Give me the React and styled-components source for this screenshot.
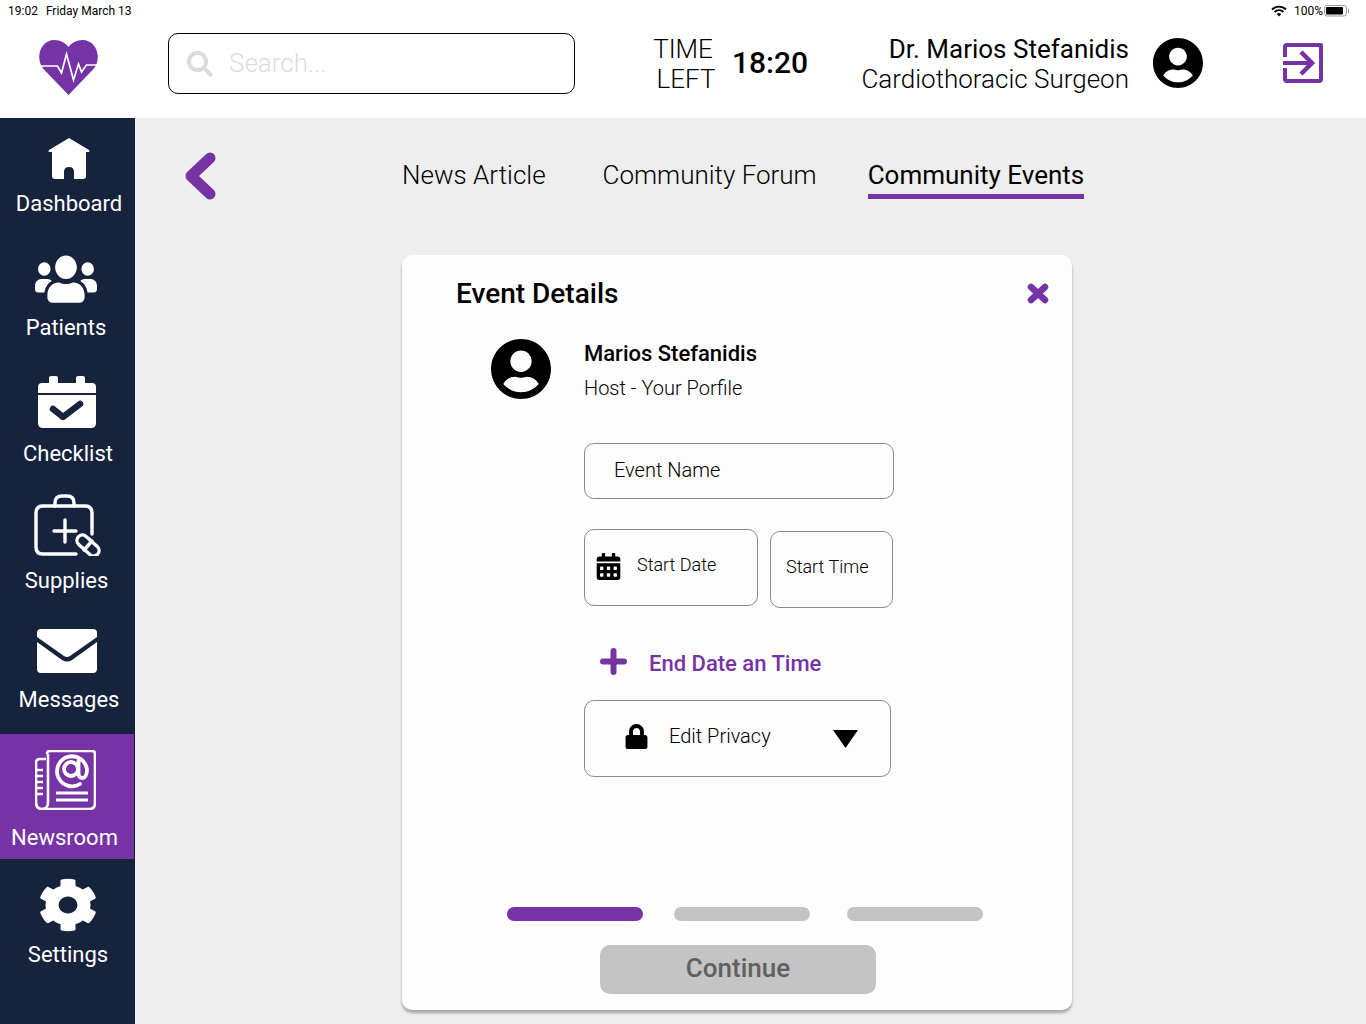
import React from "react";
import styled, { createGlobalStyle } from "styled-components";
import { FaUsers, FaCog, FaLock, FaCalendarAlt, FaSearch, FaUserCircle } from "react-icons/fa";

const purple = "#7533a5";
const navy = "#15233c";

const Global = createGlobalStyle`
  html, body { margin: 0; padding: 0; background: #eee; }
  body { font-family: Roboto, "Liberation Sans", sans-serif; color: #000; }
  * { box-sizing: border-box; }
`;

const Page = styled.div`
  width: 1366px;
  height: 1024px;
  overflow: hidden;
  display: flex;
  flex-direction: column;
`;

const StatusBar = styled.div`
  height: 22px;
  background: #fff;
  display: flex;
  align-items: center;
  padding: 0 16px 0 8px;
  font-size: 12px;
  gap: 8px;
`;

const StatusRight = styled.div`
  margin-left: auto;
  display: flex;
  align-items: center;
  gap: 7px;
`;

const Header = styled.header`
  height: 96px;
  background: #fff;
  display: flex;
  align-items: center;
  padding: 0 0 13px 38px;
`;

const Logo = styled.svg`
  width: 61px;
  height: 55px;
  margin-top: 7px;
`;

const SearchBox = styled.div`
  width: 407px;
  height: 61px;
  margin-left: 69px;
  border: 1px solid #000;
  border-radius: 10px;
  display: flex;
  align-items: center;
  padding-left: 18px;
  gap: 16px;
  color: #dcdcdc;
  font-size: 26px;
  font-weight: 300;
  & > span { margin-bottom: 2px; }
`;

const TimeLabel = styled.div`
  width: 90px;
  margin-left: 63px;
  font-size: 26px;
  font-weight: 300;
  line-height: 30px;
  text-align: center;
  & > span { display: block; }
  & > span + span { padding-left: 6px; }
`;

const TimeValue = styled.div`
  margin: 0 0 2px 4px;
  width: 76px;
  font-size: 30px;
  font-weight: 500;
  white-space: nowrap;
`;

const Doctor = styled.div`
  margin-left: 53px;
  width: 268px;
  text-align: right;
  font-size: 26px;
  line-height: 30px;
  font-weight: 300;
  white-space: nowrap;
  & > strong { display: block; font-weight: 400; }
`;

const HeaderAvatar = styled(FaUserCircle)`
  width: 50px;
  height: 52px;
  margin: 0 0 2px 24px;
`;

const LogoutIcon = styled.svg`
  width: 40px;
  height: 40px;
  margin: 0 0 2px 80px;
`;

const Body = styled.div`
  flex: 1;
  display: flex;
  min-height: 0;
`;

const Sidebar = styled.nav`
  width: 135px;
  background: ${navy};
  display: flex;
  flex-direction: column;
`;

const NavItem = styled.div`
  width: ${p => (p.$active ? "134px" : "135px")};
  height: ${p => p.$h}px;
  padding-top: ${p => p.$pt}px;
  padding-left: ${p => Math.max(0, 2 * p.$cx - 135)}px;
  padding-right: ${p => Math.max(0, 135 - 2 * p.$cx)}px;
  background: ${p => (p.$active ? purple : "transparent")};
  display: flex;
  flex-direction: column;
  align-items: center;
  color: #fff;
`;

const NavLabel = styled.div`
  margin-top: ${p => p.$gap}px;
  margin-left: ${p => p.$lo || 0}px;
  font-size: 22px;
  font-weight: 400;
  line-height: 24px;
  white-space: nowrap;
`;

const Main = styled.main`
  flex: 1;
  background: #eee;
  display: flex;
  flex-direction: column;
`;

const TabRow = styled.div`
  height: 137px;
  display: flex;
  align-items: flex-start;
  padding-left: 49px;
`;

const BackIcon = styled.svg`
  width: 32px;
  height: 48px;
  margin-top: 34px;
`;

const Tabs = styled.div`
  display: flex;
  margin-left: 186px;
  margin-top: 40px;
  gap: 57px;
`;

const Tab = styled.div`
  font-size: 26px;
  font-weight: ${p => (p.$active ? 400 : 300)};
  line-height: 34px;
  height: 41px;
  white-space: nowrap;
  border-bottom: ${p => (p.$active ? `5px solid ${purple}` : "none")};
  margin-left: ${p => p.$ml || 0}px;
`;

const Card = styled.section`
  width: 670px;
  height: 755px;
  margin-left: 267px;
  background: #fdfdfd;
  border-radius: 10px;
  box-shadow: 0 3px 3px rgba(0, 0, 0, 0.3);
  display: flex;
  flex-direction: column;
`;

const CardHead = styled.div`
  display: flex;
  align-items: center;
  justify-content: space-between;
  padding: 20px 23px 0 54px;
  height: 56px;
`;

const CardTitle = styled.h2`
  margin: 0;
  font-size: 28px;
  font-weight: 500;
`;

const CloseIcon = styled.svg`
  width: 22px;
  height: 21px;
`;

const HostRow = styled.div`
  display: flex;
  margin: 28px 0 0 89px;
  gap: 33px;
`;

const HostAvatar = styled(FaUserCircle)`
  width: 60px;
  height: 62px;
  margin-top: -1px;
`;

const HostName = styled.div`
  font-size: 22px;
  font-weight: 500;
  line-height: 28px;
  margin-top: 1px;
`;

const HostRole = styled.div`
  font-size: 20px;
  font-weight: 300;
  line-height: 28px;
  margin-top: 6px;
`;

const Form = styled.div`
  margin: 41px 0 0 182px;
  display: flex;
  flex-direction: column;
  align-items: flex-start;
`;

const Field = styled.div`
  width: ${p => p.$w}px;
  height: ${p => p.$h}px;
  margin-top: ${p => p.$mt || 0}px;
  margin-left: ${p => p.$ml || 0}px;
  padding-left: ${p => p.$pl}px;
  border: 1px solid #8a8a8a;
  border-radius: 10px;
  display: flex;
  align-items: center;
  font-weight: 300;
  font-size: ${p => p.$fs || 20}px;
`;

const DateRow = styled.div`
  display: flex;
  align-items: flex-start;
  margin-top: 30px;
`;

const FieldText = styled.span`
  margin-left: ${p => p.$ml || 0}px;
  margin-bottom: ${p => p.$mb || 0}px;
`;

const AddRow = styled.div`
  display: flex;
  align-items: center;
  gap: 22px;
  margin: 41px 0 0 16px;
  color: ${purple};
  font-size: 22px;
  font-weight: 500;
  height: 28px;
`;

const PlusIcon = styled.svg`
  width: 27px;
  height: 27px;
  margin-bottom: 3px;
`;

const Caret = styled.svg`
  width: 25px;
  height: 18px;
  margin-left: 62px;
`;

const Progress = styled.div`
  display: flex;
  margin: 130px 0 0 105px;
`;

const Step = styled.div`
  width: 136px;
  height: 14px;
  border-radius: 7px;
  margin-right: ${p => p.$mr}px;
  background: ${p => (p.$on ? purple : "#c4c4c4")};
`;

const ContinueBtn = styled.button`
  width: 276px;
  height: 49px;
  margin: 24px 0 0 198px;
  padding: 0 0 3px;
  border: none;
  border-radius: 10px;
  background: #c4c4c4;
  color: #606060;
  font-family: inherit;
  font-size: 26px;
  font-weight: 500;
`;

const HomeIcon = () => (
  <svg width="42" height="42" viewBox="0 0 42 42" fill="#fff">
    <path d="M21 0 L41 12 Q42.5 14 40 14 L38 14 L38 38 Q38 41 35 41 L26 41 L26 34 Q26 29 21 29 Q16 29 16 34 L16 41 L7 41 Q4 41 4 38 L4 14 L2 14 Q-.5 14 1 12 Z" />
  </svg>
);

const ChecklistIcon = () => (
  <svg width="58" height="52" viewBox="0 0 58 52" fill="#fff">
    <path d="M13 0h5q2 0 2 2v5h18V2q0-2 2-2h5q2 0 2 2v5h7q4 0 4 4v6H0v-6q0-4 4-4h7V2q0-2 2-2z" />
    <path d="M0 19h58v28q0 5-5 5H5q-5 0-5-5z" />
    <path d="M15 33l10 8 17-13" fill="none" stroke={navy} strokeWidth="6.5" strokeLinecap="round" strokeLinejoin="round" />
  </svg>
);

const SuppliesIcon = () => (
  <svg width="67" height="62" viewBox="0 0 67 62" fill="none" stroke="#fff" strokeWidth="3.4" strokeLinecap="round" strokeLinejoin="round">
    <path d="M42 60H9q-7 0-7-7V19q0-7 7-7h42q7 0 7 7v21" />
    <path d="M21 12V9q0-7 7-7h5q7 0 7 7v3" />
    <path d="M31 26v22M20 37h22" />
    <rect x="41" y="46" width="26" height="11" rx="5.5" transform="rotate(42 54 51.5)" />
    <path d="M50 56l8-9" />
  </svg>
);

const MailIcon = () => (
  <svg width="60" height="44" viewBox="0 0 60 44" fill="#fff">
    <path d="M4 0h52q4 0 4 4v4L33 27q-3 2-6 0L0 8V4q0-4 4-4z" />
    <path d="M0 13l25 18q5 3 10 0l25-18v27q0 4-4 4H4q-4 0-4-4z" />
  </svg>
);

const NewsIcon = () => (
  <svg width="61" height="60" viewBox="0 0 61 60" fill="none" stroke="#fff" strokeWidth="2.6" strokeLinejoin="round">
    <path d="M12 4q0-3 3-3h42q3 0 3 3v49q0 6-6 6H7" />
    <path d="M11 9H5Q1 9 1 13v39q0 7 6 7t6-7V4" />
    <path d="M1 20h7M1 26h7M1 32h7M1 38h7M1 44h7" />
    <path d="M21 43h32M21 50h32" strokeWidth="3" />
    <circle cx="36" cy="19" r="7" strokeWidth="3.8" />
    <path d="M43.500 11v12q0 5 4 5t4.500-8a15 15 0 1 0-7 14" strokeWidth="3.8" strokeLinecap="round" />
  </svg>
);

const navItems = [
  { label: "Dashboard", h: 125, pt: 20, gap: 12, cx: 69, icon: <HomeIcon /> },
  { label: "Patients", h: 124, pt: 9, gap: 10, cx: 66, icon: <FaUsers style={{ width: 62, height: 54 }} preserveAspectRatio="none" /> },
  { label: "Checklist", h: 118, pt: 9, gap: 14, cx: 67, lo: 2, icon: <ChecklistIcon /> },
  { label: "Supplies", h: 135, pt: 9, gap: 13, cx: 67.5, lo: -2, icon: <SuppliesIcon /> },
  { label: "Messages", h: 114, pt: 9, gap: 15, cx: 67, lo: 4, icon: <MailIcon /> },
  { label: "Newsroom", h: 125, pt: 16, gap: 16, cx: 65.5, lo: -1, active: true, icon: <NewsIcon /> },
  { label: "Settings", h: 165, pt: 19, gap: 11, cx: 68, icon: <FaCog style={{ width: 60, height: 54 }} preserveAspectRatio="none" /> },
];

export default function App() {
  return (
    <Page>
      <Global />
      <StatusBar>
        <span>19:02</span>
        <span>Friday March 13</span>
        <StatusRight>
          <svg width="16" height="12" viewBox="0 0 16 12">
            <path d="M1 4.500a10 10 0 0 1 14 0M3.500 7a6.500 6.500 0 0 1 9 0" fill="none" stroke="#000" strokeWidth="1.8" />
            <path d="M5.700 9a3.400 3.400 0 0 1 4.600 0L8 11.500z" />
          </svg>
          <span>100%</span>
          <svg width="26" height="12" viewBox="0 0 26 12" style={{ marginLeft: -6 }}>
            <rect x=".5" y=".5" width="22" height="10.5" rx="2.5" fill="none" stroke="#999" />
            <rect x="2" y="2" width="17" height="7.5" rx="1" />
            <rect x="24" y="4" width="1" height="4" fill="#999" />
          </svg>
        </StatusRight>
      </StatusBar>

      <Header>
        <Logo viewBox="0 0 60 55">
          <path d="M30 55 L5 29 C-4 18 2 0 16 0 C22 0 27 3 30 7 C33 3 38 0 44 0 C58 0 64 18 55 29 Z" fill={purple} />
          <path d="M1 26H19L23 33L28 14L35 40L40 24L43 32L48 25H60" fill="none" stroke="#fff" strokeWidth="1.7" />
        </Logo>
        <SearchBox>
          <FaSearch size={26} />
          <span>Search...</span>
        </SearchBox>
        <TimeLabel>
          <span>TIME</span>
          <span>LEFT</span>
        </TimeLabel>
        <TimeValue>18:20</TimeValue>
        <Doctor>
          <strong>Dr. Marios Stefanidis</strong>
          Cardiothoracic Surgeon
        </Doctor>
        <HeaderAvatar />
        <LogoutIcon viewBox="0 0 40 40" fill="none" stroke={purple} strokeWidth="4">
          <path d="M2 14V4q0-2 2-2h34v0q0 0 0 0v34q0 2-2 2H4q-2 0-2-2V25" strokeLinejoin="round" />
          <path d="M0 20h27" />
          <path d="M18 9l11 11-11 11" strokeWidth="4.500" />
        </LogoutIcon>
      </Header>

      <Body>
        <Sidebar>
          {navItems.map(n => (
            <NavItem key={n.label} $h={n.h} $pt={n.pt} $cx={n.cx} $active={n.active}>
              {n.icon}
              <NavLabel $gap={n.gap} $lo={n.lo}>{n.label}</NavLabel>
            </NavItem>
          ))}
        </Sidebar>
        <Main>
          <TabRow>
            <BackIcon viewBox="0 0 32 48">
              <path d="M26 6L7 24l19 18" fill="none" stroke={purple} strokeWidth="11" strokeLinecap="round" strokeLinejoin="round" />
            </BackIcon>
            <Tabs>
              <Tab>News Article</Tab>
              <Tab>Community Forum</Tab>
              <Tab $active $ml={-6}>Community Events</Tab>
            </Tabs>
          </TabRow>
          <Card>
            <CardHead>
              <CardTitle>Event Details</CardTitle>
              <CloseIcon viewBox="0 0 22 21">
                <path d="M4 4l14 13M18 4L4 17" stroke={purple} strokeWidth="6.500" strokeLinecap="round" />
              </CloseIcon>
            </CardHead>
            <HostRow>
              <HostAvatar />
              <div>
                <HostName>Marios Stefanidis</HostName>
                <HostRole>Host - Your Porfile</HostRole>
              </div>
            </HostRow>
            <Form>
              <Field $w={310} $h={56} $pl={29}>
                <FieldText $mb={2}>Event Name</FieldText>
              </Field>
              <DateRow>
                <Field $w={174} $h={77} $pl={10} $fs={18}>
                  <FaCalendarAlt size={27} style={{ marginBottom: 3 }} />
                  <FieldText $ml={15} $mb={7}>Start Date</FieldText>
                </Field>
                <Field $w={123} $h={77} $pl={15} $fs={18} $mt={2} $ml={12}>
                  <FieldText $mb={7}>Start Time</FieldText>
                </Field>
              </DateRow>
              <AddRow>
                <PlusIcon viewBox="0 0 27 27">
                  <path d="M13.5 3v21M3 13.5h21" stroke={purple} strokeWidth="6" strokeLinecap="round" />
                </PlusIcon>
                End Date an Time
              </AddRow>
              <Field $w={307} $h={77} $pl={39} $mt={23}>
                <FaLock size={25} style={{ marginBottom: 5 }} />
                <FieldText $ml={20} $mb={6}>Edit Privacy</FieldText>
                <Caret viewBox="0 0 25 18"><path d="M0 0h25L12.5 18z" /></Caret>
              </Field>
            </Form>
            <Progress>
              <Step $on $mr={31} />
              <Step $mr={37} />
              <Step $mr={0} />
            </Progress>
            <ContinueBtn>Continue</ContinueBtn>
          </Card>
        </Main>
      </Body>
    </Page>
  );
}
